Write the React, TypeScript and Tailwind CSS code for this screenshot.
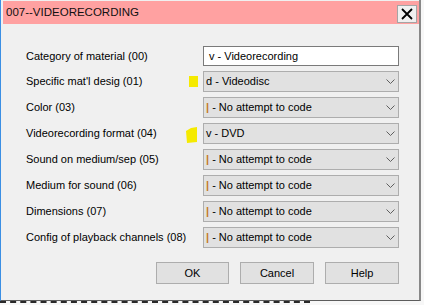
import React from 'react';

type Field = {
  label: string;
  value: string;
  kind: 'input' | 'select';
  mark?: 'square' | 'slant';
};

const fields: Field[] = [
  { label: 'Category of material (00)', value: 'v - Videorecording', kind: 'input' },
  { label: "Specific mat'l desig (01)", value: 'd - Videodisc', kind: 'select', mark: 'square' },
  { label: 'Color (03)', value: '| - No attempt to code', kind: 'select' },
  { label: 'Videorecording format (04)', value: 'v - DVD', kind: 'select', mark: 'slant' },
  { label: 'Sound on medium/sep (05)', value: '| - No attempt to code', kind: 'select' },
  { label: 'Medium for sound (06)', value: '| - No attempt to code', kind: 'select' },
  { label: 'Dimensions (07)', value: '| - No attempt to code', kind: 'select' },
  { label: 'Config of playback channels (08)', value: '| - No attempt to code', kind: 'select' }
];

const Value: React.FC<{ text: string }> = ({ text }) => {
  if (text.startsWith('|')) {
    return (
      <span>
        <span className="text-[#c47a2c] font-bold">|</span>
        <span> {text.slice(2)}</span>
      </span>
    );
  }
  return <span>{text}</span>;
};

const Chevron = () => (
  <svg width="9" height="5" viewBox="0 0 9 5" className="shrink-0">
    <polyline points="0.5,0.5 4.5,4.5 8.5,0.5" fill="none" stroke="#5f5f5f" strokeWidth="1" />
  </svg>
);

const Marker: React.FC<{ type: 'square' | 'slant' }> = ({ type }) =>
  type === 'square' ? (
    <div className="absolute left-[-14px] top-[5px] w-[9px] h-[11px] bg-[#f5ea00]" />
  ) : (
    <svg width="12" height="17" viewBox="0 0 12 17" className="absolute left-[-17px] top-[3px]">
      <polygon points="0,5 5,2 11,1 11,16 1,17" fill="#f5ea00" />
    </svg>
  );

const App: React.FC = () => {
  return (
    <div className="w-[424px] h-[305px] bg-[#f7f7f7] overflow-hidden font-['Liberation_Sans',Arial,sans-serif] text-[11px] text-black">
      <div className="w-[421px] h-[301px] bg-[#f0f0f0] border-l border-l-[#3b8fe4] border-r-2 border-r-[#888888] border-b border-b-[#5c5c5c] pt-px pl-[2px] pr-0 flex flex-col">
        {/* Title bar */}
        <div className="h-[23px] bg-[#ffa1a1] flex items-center justify-between pl-[3px] pr-[2px]">
          <span className="text-[11.5px] leading-none text-[#111]">007--VIDEORECORDING</span>
          <button className="w-[20px] h-[18px] mt-[3px] bg-[#f0f0f0] border border-[#a5a5a5] flex items-center justify-center">
            <svg width="12" height="12" viewBox="0 0 12 12">
              <path d="M1 1 L11 11 M11 1 L1 11" stroke="#000" strokeWidth="1.8" />
            </svg>
          </button>
        </div>

        {/* Fields */}
        <div className="pl-[23px] pt-[22px] flex flex-col gap-[5px]">
          {fields.map((f) => (
            <div key={f.label} className={`flex items-center ${f.kind === 'input' ? 'h-[20px]' : 'h-[21px]'}`}>
              <div className="w-[177px] leading-none">{f.label}</div>
              <div className="relative w-[196px] h-full">
                {f.mark && <Marker type={f.mark} />}
                {f.kind === 'input' ? (
                  <div className="h-full bg-white border border-[#7a7a7a] flex items-center pl-[5px]">
                    <Value text={f.value} />
                  </div>
                ) : (
                  <div className="h-full bg-[#e1e1e1] border border-[#adadad] flex items-center justify-between pl-[2px] pr-[3px]">
                    <Value text={f.value} />
                    <Chevron />
                  </div>
                )}
              </div>
            </div>
          ))}
        </div>

        {/* Buttons */}
        <div className="mt-[14px] flex gap-[11px] pl-[153px]">
          {['OK', 'Cancel', 'Help'].map((b, i) => (
            <button
              key={b}
              className={`${i === 0 ? 'w-[73px]' : 'w-[74px]'} h-[22px] bg-[#e1e1e1] border border-[#adadad] flex items-center justify-center`}
            >
              {b}
            </button>
          ))}
        </div>
      </div>

      {/* Edge of the window behind */}
      <div className="h-[4px] w-[310px] border-t-2 border-dashed border-[#2a2a2a]" />
    </div>
  );
};

export default App;
